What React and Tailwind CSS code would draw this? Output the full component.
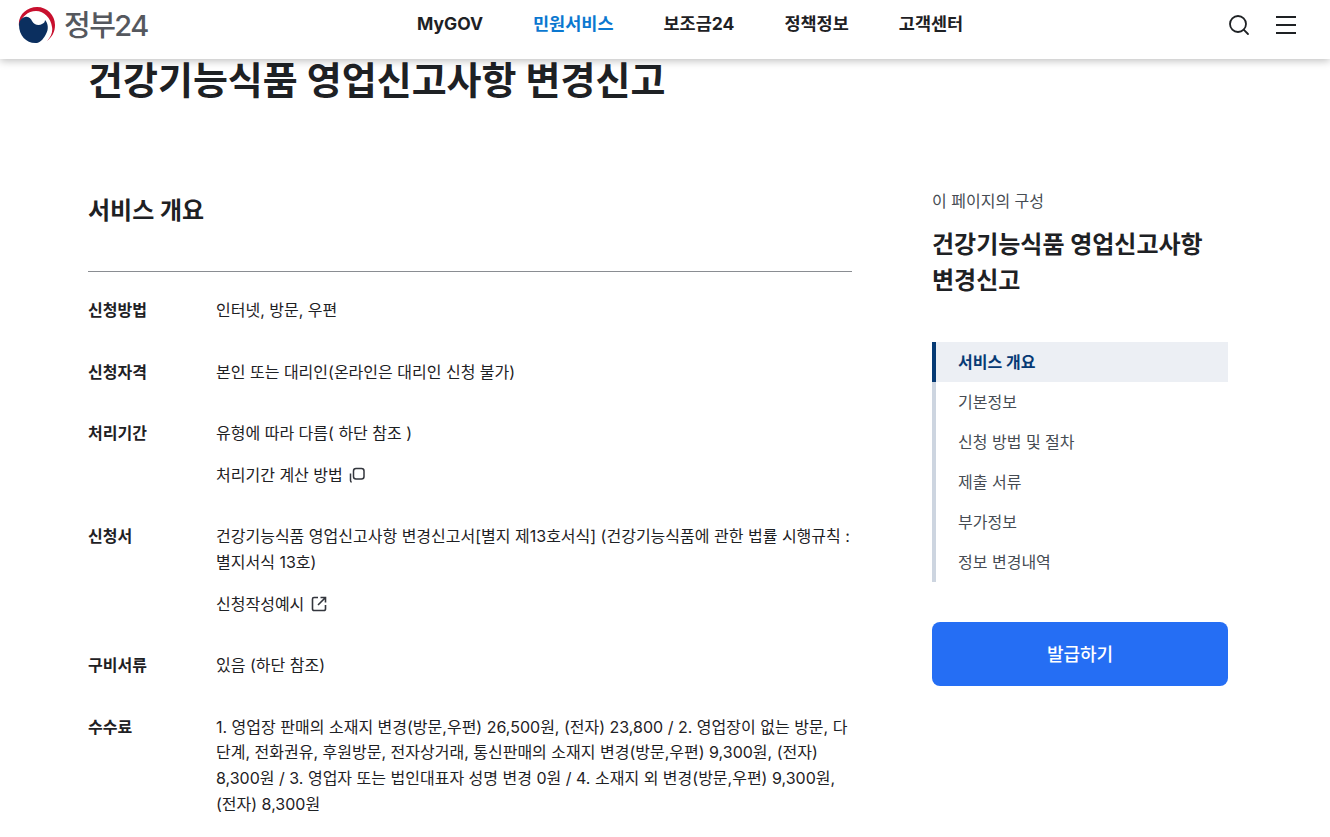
import { Search } from 'lucide-react'

function Logo() {
  return (
    <svg viewBox="0 0 38 38" className="w-[38px] h-[38px] shrink-0">
      <path d="M1 20C-.5 9 9 1 19 1c10 0 18 8 18 18 0 7-3 12-8 16 4-4 6-9 5-14C33 12 26 5 18 5 10 5 3 11 1 20z" fill="#c8102e" />
      <path d="M1 19c0-2 1-7 6-8 4-1 6 2 7 4 2 4 7 5 10 3 2-1 3-2 3-4 3 3 4 9 1 14-2 4-5 8-9 9C9 38 1 30 1 19z" fill="#0b2f5f" />
    </svg>
  )
}

function Row({ label, children }) {
  return (
    <div className="flex mb-[36px]">
      <dt className="w-[128px] shrink-0 font-bold text-[16px] leading-[25.6px]">{label}</dt>
      <dd className="flex-1 text-[16px] leading-[25.6px]">{children}</dd>
    </div>
  )
}

function CopyIcon() {
  return (
    <svg viewBox="0 0 18 18" className="w-[18px] h-[18px] inline-block ml-[5px] align-[-3px]" fill="none" stroke="#33363d" strokeWidth="1.500">
      <rect x="5.500" y="2.500" width="10.500" height="10.500" rx="2.500" />
      <path d="M2.500 7.500v7c0 1 .5 1.500 1.200 1.500" />
    </svg>
  )
}

function LinkIcon() {
  return (
    <svg viewBox="0 0 18 18" className="w-[18px] h-[18px] ml-[6px]" fill="none" stroke="#33363d" strokeWidth="1.600">
      <path d="M8 2.500H4A1.500 1.500 0 0 0 2.500 4v10A1.500 1.500 0 0 0 4 15.500h10a1.500 1.500 0 0 0 1.500-1.500v-4" />
      <path d="M10.500 2.500h5v5M15.500 2.500 8 10" />
    </svg>
  )
}

const toc = ['기본정보', '신청 방법 및 절차', '제출 서류', '부가정보', '정보 변경내역']

export default function App() {
  return (
    <div className="h-[837px] overflow-hidden bg-white font-['Inter','Noto_Sans_CJK_KR',sans-serif] text-[#1e2124]">
      <header className="relative z-10 h-[59px] bg-white shadow-[0_2px_8px_rgba(0,0,0,0.25)] flex items-center pl-[18px] pr-[34px]">
        <div className="flex items-center gap-[8px] w-[300px] -mt-[9px]">
          <Logo />
          <span className="text-[29px] font-medium tracking-[-1.500px] leading-none text-[#55585e]">정부24</span>
        </div>
        <nav className="flex gap-[50px] ml-[99px] -mt-[11px] font-bold text-[17.500px] leading-none">
          <a>MyGOV</a>
          <a className="text-[#0b78d0]">민원서비스</a>
          <a>보조금24</a>
          <a>정책정보</a>
          <a>고객센터</a>
        </nav>
        <div className="ml-auto flex items-center gap-[25px] -mt-[9px]">
          <Search className="w-[24px] h-[24px] text-[#1e2124]" strokeWidth={1.800} />
          <div className="w-[20px] flex flex-col gap-[6px]">
            <span className="h-[2px] bg-[#1e2124]" />
            <span className="h-[2px] bg-[#1e2124]" />
            <span className="h-[2px] bg-[#1e2124]" />
          </div>
        </div>
      </header>

      <main className="pl-[88px]">
        <h1 className="text-[38px] font-bold leading-[46px] -mt-[2px]">건강기능식품 영업신고사항 변경신고</h1>
        <div className="flex mt-[92px]">
          <section className="w-[764px]">
            <h2 className="text-[24px] font-bold leading-[32px]">서비스 개요</h2>
            <div className="h-px bg-[#8a8d92] mt-[44px] mb-[26px]" />
            <dl>
              <Row label="신청방법">인터넷, 방문, 우편</Row>
              <Row label="신청자격">본인 또는 대리인(온라인은 대리인 신청 불가)</Row>
              <Row label="처리기간">
                <p>유형에 따라 다름( 하단 참조 )</p>
                <p className="mt-[16px]">처리기간 계산 방법<CopyIcon /></p>
              </Row>
              <Row label="신청서">
                <p>건강기능식품 영업신고사항 변경신고서[별지 제13호서식] (건강기능식품에 관한 법률 시행규칙 : 별지서식 13호)</p>
                <p className="mt-[16px] flex items-center">신청작성예시<LinkIcon /></p>
              </Row>
              <Row label="구비서류">있음 (하단 참조)</Row>
              <Row label="수수료">1. 영업장 판매의 소재지 변경(방문,우편) 26,500원, (전자) 23,800 / 2. 영업장이 없는 방문, 다단계, 전화권유, 후원방문, 전자상거래, 통신판매의 소재지 변경(방문,우편) 9,300원, (전자) 8,300원 / 3. 영업자 또는 법인대표자 성명 변경 0원 / 4. 소재지 외 변경(방문,우편) 9,300원, (전자) 8,300원</Row>
            </dl>
          </section>
          <aside className="w-[296px] ml-[80px]">
            <p className="text-[16px] leading-[24px] text-[#464c53] -mt-[6px]">이 페이지의 구성</p>
            <p className="text-[24px] font-bold leading-[36px] mt-[14px] break-all">건강기능식품 영업신고사항 변경신고</p>
            <ul className="mt-[43px] border-l-[4px] border-[#cdd5e0]">
              <li className="-ml-[4px] h-[40px] flex items-center pl-[22px] bg-[#eceff4] border-l-[4px] border-[#063a74] font-bold text-[16px] text-[#063a74]">서비스 개요</li>
              {toc.map((t) => (
                <li key={t} className="h-[40px] flex items-center pl-[22px] text-[16px] text-[#464c53]">{t}</li>
              ))}
            </ul>
            <button className="w-full h-[64px] mt-[40px] rounded-[8px] bg-[#256ef4] text-white text-[18px] font-medium">발급하기</button>
          </aside>
        </div>
      </main>
    </div>
  )
}
